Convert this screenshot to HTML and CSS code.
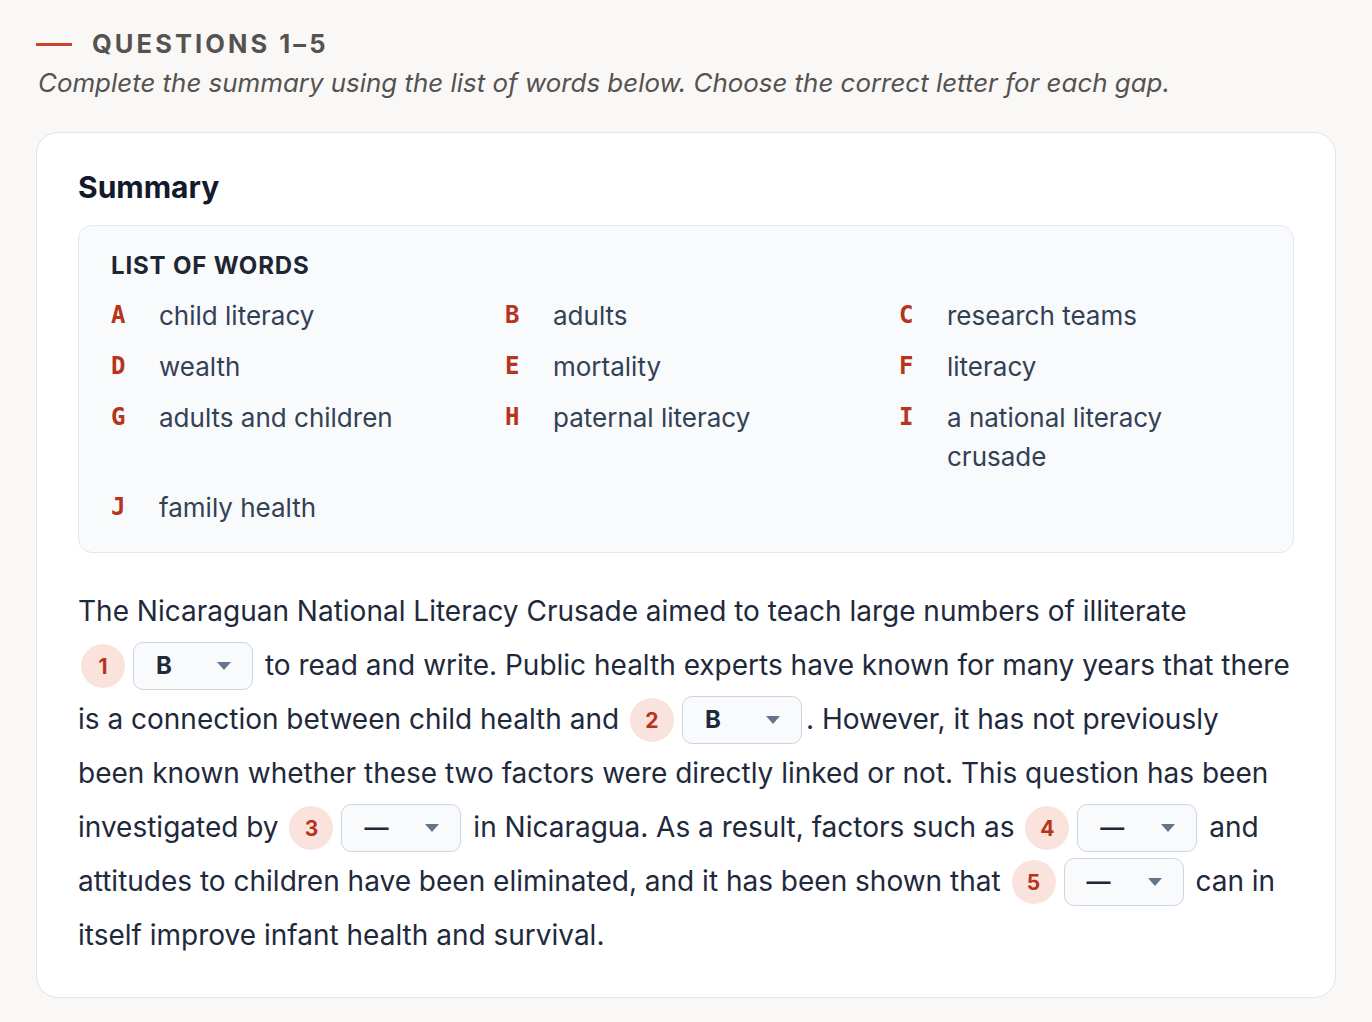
FILE: index.html
```html
<!DOCTYPE html>
<html lang="en">
<head>
<meta charset="utf-8">
<title>Questions 1–5</title>
<link rel="stylesheet" href="styles.css">
</head>
<body>
<main class="page">
  <header class="section-head">
    <div class="title-row">
      <span class="dash"></span>
      <h2 class="section-title">QUESTIONS 1–5</h2>
    </div>
    <p class="instruction">Complete the summary using the list of words below. Choose the correct letter for each gap.</p>
  </header>

  <section class="card">
    <h3 class="card-title">Summary</h3>

    <div class="word-box">
      <h4 class="word-box-title">LIST OF WORDS</h4>
      <ul class="word-grid">
        <li class="word"><span class="letter">A</span><span class="text">child literacy</span></li>
        <li class="word"><span class="letter">B</span><span class="text">adults</span></li>
        <li class="word"><span class="letter">C</span><span class="text">research teams</span></li>
        <li class="word"><span class="letter">D</span><span class="text">wealth</span></li>
        <li class="word"><span class="letter">E</span><span class="text">mortality</span></li>
        <li class="word"><span class="letter">F</span><span class="text">literacy</span></li>
        <li class="word"><span class="letter">G</span><span class="text">adults and children</span></li>
        <li class="word"><span class="letter">H</span><span class="text">paternal literacy</span></li>
        <li class="word"><span class="letter">I</span><span class="text">a national literacy crusade</span></li>
        <li class="word"><span class="letter">J</span><span class="text">family health</span></li>
      </ul>
    </div>

    <p class="summary">The Nicaraguan National Literacy Crusade aimed to teach large numbers of illiterate
      <span class="gap"><span class="badge">1</span><span class="select"><span class="val">B</span><span class="caret"></span></span></span> to read and write. Public health experts have known for many years that there is a connection between child health and
      <span class="gap"><span class="badge">2</span><span class="select"><span class="val">B</span><span class="caret"></span></span></span>. However, it has not previously been known whether these two factors were directly linked or not. This question has been investigated by
      <span class="gap"><span class="badge">3</span><span class="select"><span class="val dashval">—</span><span class="caret"></span></span></span> in Nicaragua. As a result, factors such as
      <span class="gap"><span class="badge">4</span><span class="select"><span class="val dashval">—</span><span class="caret"></span></span></span> and attitudes to children have been eliminated, and it has been shown that
      <span class="gap"><span class="badge">5</span><span class="select"><span class="val dashval">—</span><span class="caret"></span></span></span> can in itself improve infant health and survival.</p>
  </section>
</main>
</body>
</html>
```

FILE: styles.css
```css
* { box-sizing: border-box; }

html, body {
  margin: 0;
  padding: 0;
  background: #f9f8f7;
}

body {
  font-family: Inter, "Noto Sans", sans-serif;
  color: #1e293b;
}

.page {
  padding: 28px 36px 24px 36px;
}

.section-head {
  margin-bottom: 31px;
}

.title-row {
  display: flex;
  align-items: center;
  gap: 20px;
}

.dash {
  width: 36px;
  height: 3px;
  background: #c8442a;
  flex: none;
}

.section-title {
  margin: 0;
  font-size: 25.5px;
  line-height: 32px;
  font-weight: 700;
  letter-spacing: 0.12em;
  color: #55524f;
}

.instruction {
  margin: 5px 0 0 2px;
  font-size: 25.9px;
  line-height: 36px;
  font-style: italic;
  color: #55524f;
}

.card {
  background: #ffffff;
  border: 1px solid #e6e4e1;
  border-radius: 22px;
  padding: 36px 41px 35px 41px;
}

.card-title {
  margin: 0 0 20px 0;
  font-size: 30px;
  line-height: 36px;
  font-weight: 700;
  color: #121a2b;
}

.word-box {
  background: #f8fafc;
  border: 1px solid #e2e8f0;
  border-radius: 14px;
  padding: 25px 32px 25px 32px;
}

.word-box-title {
  margin: 0 0 15px 0;
  font-size: 24px;
  line-height: 30px;
  font-weight: 700;
  color: #1e2533;
  letter-spacing: 0.035em;
}

.word-grid {
  list-style: none;
  margin: 0;
  padding: 0;
  display: grid;
  grid-template-columns: repeat(3, 1fr);
  column-gap: 32px;
  row-gap: 12px;
}

.word {
  display: flex;
  align-items: flex-start;
  font-size: 26px;
  line-height: 39px;
  color: #334155;
}

.letter {
  width: 48px;
  flex: none;
  font-family: "DejaVu Sans Mono", "Liberation Mono", monospace;
  font-weight: 700;
  font-size: 24px;
  color: #b5341b;
}

.summary {
  margin: 31px 0 0 0;
  padding-right: 2px;
  font-size: 28px;
  line-height: 54px;
  color: #1e293b;
}

.gap {
  display: inline-flex;
  align-items: center;
  gap: 8px;
  vertical-align: middle;
  margin: 0 4px 0 3px;
  position: relative;
  top: -1px;
  line-height: 1;
}

.badge {
  width: 44px;
  height: 44px;
  border-radius: 50%;
  background: #f9e3dc;
  color: #b5341b;
  font-size: 21px;
  font-weight: 700;
  display: inline-flex;
  align-items: center;
  justify-content: center;
  line-height: 1;
}

.select {
  width: 120px;
  height: 48px;
  border: 1.5px solid #cbd5e1;
  border-radius: 10px;
  background: #f8fafc;
  display: inline-flex;
  align-items: center;
  justify-content: space-between;
  padding: 0 21px 0 22px;
  line-height: 1;
}

.val {
  font-size: 24px;
  font-weight: 700;
  color: #1e293b;
}

.dashval {
  font-weight: 600;
}

.caret {
  width: 0;
  height: 0;
  border-left: 7px solid transparent;
  border-right: 7px solid transparent;
  border-top: 8px solid #64748b;
}
```
